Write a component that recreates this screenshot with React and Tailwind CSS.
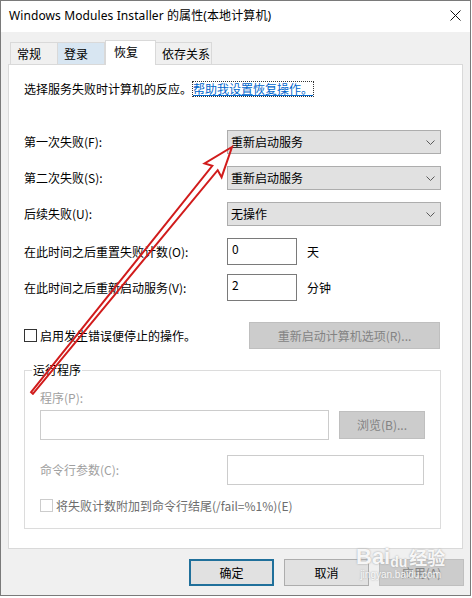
import React from "react";

/**
 * Windows service properties dialog, "恢复" tab, with a red hand-drawn arrow on top.
 */

const Chevron = () => (
  <svg width="9" height="5" viewBox="0 0 9 5">
    <path d="M0.5 0.5 L4.5 4.5 L8.5 0.5" fill="none" stroke="#5a5a5a" strokeWidth="1" />
  </svg>
);

const Select = ({ value }) => (
  <div className="w-[214px] h-[24px] bg-[#e1e1e1] border border-[#adadad] flex items-center justify-between pl-[3px] pr-[5px]">
    <span>{value}</span>
    <Chevron />
  </div>
);

const SelectRow = ({ label, value, className }) => (
  <div className={`flex items-center ${className}`}>
    <div className="w-[203px]">{label}</div>
    <Select value={value} />
  </div>
);

const InputRow = ({ label, value, unit, className }) => (
  <div className={`flex items-center ${className}`}>
    <div className="w-[203px]">{label}</div>
    <div className="w-[70px] h-[27px] bg-white border border-[#7a7a7a] pl-[4px] pt-[2px]">{value}</div>
    <div className="ml-[10px]">{unit}</div>
  </div>
);

const Tab = ({ label, active, hover }) => {
  if (active) {
    return (
      <div className="relative z-10 h-[25px] -mb-px w-[51px] bg-white border border-b-0 border-[#d9d9d9] flex items-center pl-[8px] pb-[3px]">
        {label}
      </div>
    );
  }
  return (
    <div
      className={`h-[22px] border border-b-0 border-[#d9d9d9] -ml-px first:ml-0 flex items-center pl-[6px] ${
        hover ? "bg-[#d8e6f2]" : "bg-[#f0f0f0]"
      } ${label.length > 2 ? "w-[57px]" : "w-[48px]"}`}
    >
      {label}
    </div>
  );
};

// hollow double-line arrow drawn over the dialog
const Arrow = () => (
  <svg className="absolute inset-0 pointer-events-none z-20" width="472" height="598" viewBox="0 0 472 598">
    <polygon
      points="31.1,392.2 212.3,165.8 204.6,163.4 232,147 221.6,177.2 217.7,170.2 32.9,393.8"
      fill="none"
      stroke="#d11c1c"
      strokeWidth="2"
      strokeLinejoin="miter"
    />
  </svg>
);

export default function App() {
  return (
    <div className="relative w-[472px] h-[598px] bg-white overflow-hidden text-[12px] leading-[16px] text-black font-['Noto_Sans_CJK_SC','Noto_Sans',sans-serif]">
      <div className="w-[471px] h-[596px] border border-[#7a7a7a] bg-[#f0f0f0] flex flex-col">
        {/* Title bar */}
        <div className="h-[31px] bg-white flex items-center justify-between pl-[8px] pr-[9px] pb-[2px]">
          <span className="font-['Noto_Sans','Noto_Sans_CJK_SC',sans-serif] tracking-[0.1px]">
            Windows Modules Installer 的属性(本地计算机)
          </span>
          <svg width="11" height="11" viewBox="0 0 11 11">
            <path d="M0.5 0.5 L10.5 10.5 M10.5 0.5 L0.5 10.5" stroke="#111" strokeWidth="1" />
          </svg>
        </div>

        {/* Tabs */}
        <div className="mt-[8px] ml-[9px] h-[24px] flex items-end">
          <Tab label="常规" />
          <Tab label="登录" hover />
          <Tab label="恢复" active />
          <Tab label="依存关系" />
        </div>

        {/* Panel */}
        <div className="ml-[7px] w-[455px] h-[485px] bg-white border border-[#d9d9d9] pl-[15px]">
          <div className="mt-[16px] h-[16px] flex items-center">
            <span>选择服务失败时计算机的反应。</span>
            <span className="h-[16px] border border-dotted border-[#333] leading-[14px] text-[#0066cc] underline">
              帮助我设置恢复操作。
            </span>
          </div>

          <SelectRow className="mt-[33px]" label="第一次失败(F):" value="重新启动服务" />
          <SelectRow className="mt-[12px]" label="第二次失败(S):" value="重新启动服务" />
          <SelectRow className="mt-[12px]" label="后续失败(U):" value="无操作" />

          <InputRow className="mt-[12px]" label="在此时间之后重置失败计数(O):" value="0" unit="天" />
          <InputRow className="mt-[9px]" label="在此时间之后重新启动服务(V):" value="2" unit="分钟" />

          <div className="mt-[21px] flex items-center">
            <div className="w-[225px] flex items-center">
              <div className="w-[13px] h-[13px] border border-[#333] bg-white" />
              <span className="ml-[3px]">启用发生错误便停止的操作。</span>
            </div>
            <div className="w-[191px] h-[27px] bg-[#cccccc] border border-[#bfbfbf] text-[#838383] flex items-center justify-center">
              重新启动计算机选项(R)...
            </div>
          </div>

          <fieldset className="mt-[13px] w-[417px] border border-[#dcdcdc] pl-[15px] pb-[16px]">
            <legend className="-ml-[8px] px-[1px]">运行程序</legend>
            <div className="mt-[12px] text-[#a0a0a0]">程序(P):</div>
            <div className="mt-[4px] flex items-center">
              <div className="w-[289px] h-[30px] border border-[#cccccc] bg-white" />
              <div className="ml-[10px] w-[86px] h-[28px] bg-[#cccccc] border border-[#bfbfbf] text-[#838383] flex items-center justify-center">
                浏览(B)...
              </div>
            </div>
            <div className="mt-[15px] flex items-center">
              <div className="w-[187px] text-[#a0a0a0]">命令行参数(C):</div>
              <div className="w-[197px] h-[30px] border border-[#cccccc] bg-white" />
            </div>
            <div className="mt-[14px] h-[13px] flex items-center">
              <div className="w-[13px] h-[13px] border border-[#cccccc] bg-white" />
              <span className="ml-[3px] text-[#6d6d6d]">将失败计数附加到命令行结尾(/fail=%1%)(E)</span>
            </div>
          </fieldset>
        </div>

        {/* Footer buttons */}
        <div className="mt-[10px] pr-[6px] flex justify-end gap-[10px]">
          <div className="w-[85px] h-[27px] bg-[#e1e1e1] border-2 border-[#20709b] flex items-center justify-center">
            确定
          </div>
          <div className="w-[85px] h-[27px] bg-[#e1e1e1] border border-[#adadad] flex items-center justify-center">
            取消
          </div>
          <div className="w-[85px] h-[27px] bg-[#cccccc] border border-[#bfbfbf] text-[#838383] flex items-center justify-center">
            应用(A)
          </div>
        </div>
      </div>

      {/* Baidu watermark */}
      <div className="absolute left-[356px] top-[545px] z-20 pointer-events-none flex flex-col items-center text-white/90 [text-shadow:0_0_2px_#9a9a9a]">
        <div className="flex items-end font-['Liberation_Sans',sans-serif] font-bold text-[22px] leading-[24px]">
          <span>Bai</span>
          <span className="text-[14px] leading-[16px] -mb-[1px]">du</span>
          <span className="ml-[2px] text-[18px] font-['Noto_Sans_CJK_SC',sans-serif]">经验</span>
        </div>
        <div className="text-[10px] leading-[12px] font-['Liberation_Sans',sans-serif]">jingyan.baidu.com</div>
      </div>

      <Arrow />
    </div>
  );
}
